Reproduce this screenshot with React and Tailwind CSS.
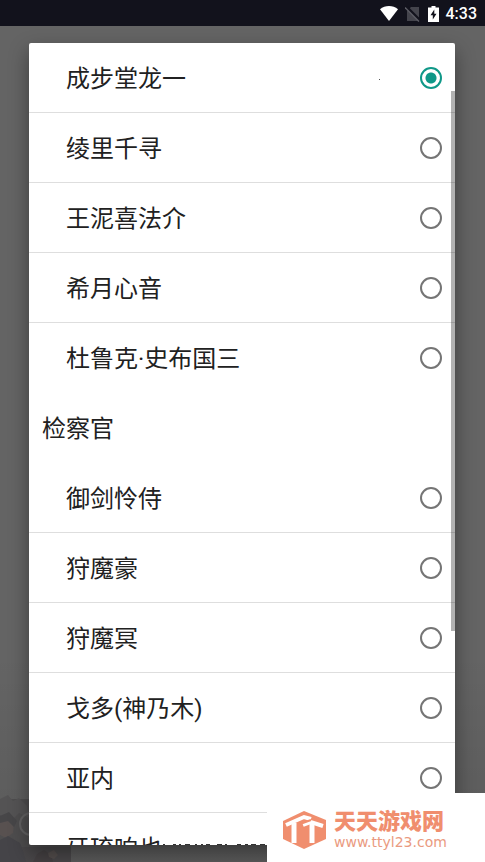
const groups = [
  {
    id: 'attorneys',
    people: ['成步堂龙一', '绫里千寻', '王泥喜法介', '希月心音', '杜鲁克·史布国三'],
  },
  {
    id: 'prosecutors',
    title: '检察官',
    people: ['御剑怜侍', '狩魔豪', '狩魔冥', '戈多(神乃木)', '亚内', '牙琉响也'],
  },
]

function StatusBar() {
  return (
    <header className="flex h-[26px] shrink-0 items-center justify-end bg-[#12121c] pt-px pr-2 text-white">
      <svg className="h-[18px] w-[18px]" viewBox="0 0 18 18" fill="currentColor" aria-hidden="true">
        <path d="M9 16 0 4.2C5-.2 13-.2 18 4.2Z" />
      </svg>
      <svg className="mx-[7px] h-4 w-4" viewBox="0 0 16 16" aria-hidden="true">
        <path d="M6 1h8v14H2V5Z" fill="#44444c" />
        <path d="M1 .5 15 14.5" stroke="#12121c" strokeWidth="3" />
        <path d="M0 1.5 14 15.5" stroke="#5c5c64" strokeWidth="1.5" />
      </svg>
      <svg className="h-4 w-[11px]" viewBox="0 0 11 16" aria-hidden="true">
        <path d="M3.5 0h4v1.5H11V16H0V1.5h3.5Z" fill="currentColor" />
        <path d="M6.3 3.5 2.5 9.3h2.3v4.2L8.5 7.7H6.3Z" fill="#12121c" />
      </svg>
      <time className="ml-[7px] font-['Roboto',sans-serif] text-base leading-5 font-medium">4:33</time>
    </header>
  )
}

function PersonOption({ name, checked, last }) {
  return (
    <label
      className={`flex h-[70px] shrink-0 items-center justify-between pr-[13px] pl-[37px] ${
        last ? '' : 'border-b border-[#dedede]'
      }`}
    >
      <span className="pt-0.5">{name}</span>
      <input
        className="h-[22px] w-[22px] appearance-none rounded-full border-2 border-[#757575] bg-white checked:border-[#0f9888] checked:bg-[radial-gradient(circle,#0f9888_5px,transparent_6px)]"
        defaultChecked={checked}
        name="person"
        type="radio"
      />
    </label>
  )
}

function PersonDialog() {
  return (
    <div
      className="relative flex min-h-0 flex-1 flex-col overflow-hidden rounded-xs bg-white shadow-[0_8px_20px_rgba(0,0,0,0.4)]"
      role="dialog"
      aria-label="人物"
    >
      {groups.map((group) => (
        <section className="flex shrink-0 flex-col" key={group.id}>
          {group.title ? (
            <h2 className="flex h-[70px] items-center pt-0.5 pl-[13px]">{group.title}</h2>
          ) : null}
          {group.people.map((name, index) => (
            <PersonOption
              checked={name === '成步堂龙一'}
              key={name}
              last={index === group.people.length - 1}
              name={name}
            />
          ))}
        </section>
      ))}
      <div className="absolute top-12 right-0 h-[540px] w-1 bg-black/30" />
      <div className="absolute top-9 right-[75px] h-px w-px bg-[#555]" />
      <svg className="absolute bottom-0 left-[134px] h-px w-[104px]" viewBox="0 0 104 1" aria-hidden="true">
        <path
          d="M0 .5h2M10 .5h3M16 .5h2M22 .5h5M32 .5h2M38 .5h2M43 .5h4M54 .5h5M62 .5h2M74 .5h4M82 .5h3M88 .5h5M97 .5h5"
          stroke="#333"
        />
      </svg>
    </div>
  )
}

function Backdrop() {
  return (
    <svg
      className="absolute bottom-0 left-0 h-[67px] w-[71px]"
      viewBox="0 0 71 67"
      fill="none"
      aria-hidden="true"
    >
      <path d="M0 4h71v63H0Z" fill="#4e4d4e" />
      <path d="M0 4 8 0l5 6 6-3 8 8 2 12-10-5-8 8L0 20Z" fill="#545354" />
      <path d="M0 26 8 22l6 6-1 10-7 5-6-3Z" fill="#585150" />
      <path d="M0 21 9 17l8 9-3 6-6-6-8 2Z" fill="#474648" />
      <path d="M0 45 8 41l12 7 8 19H0Z" fill="#454448" />
      <path d="M22 52h49v15H26Z" fill="#494749" />
      <path d="m33 67 4-8 7-4 7 5 2 7Z" fill="#454143" />
      <path d="m48 58 6-3 4 5-4 4-5-2Z" fill="#544e4d" />
      <circle cx="31" cy="29" r="11" stroke="#626162" strokeWidth="2" />
    </svg>
  )
}

function SiteMark() {
  return (
    <a
      className="absolute right-0 bottom-0 flex h-[69px] w-[218px] items-center gap-2 bg-white pt-1 pl-4 text-[#f08e6e]"
      href="#home"
    >
      <svg className="h-[38px] w-[43px] shrink-0" viewBox="0 0 43 38" fill="none" aria-hidden="true">
        <path d="M21 0 43 9v19L21 38 0 28V10Z" fill="currentColor" />
        <path d="M3 14 21 6l7 2" stroke="#fff" strokeWidth="4" />
        <path d="M11 12v20" stroke="#fff" strokeWidth="5" />
        <path d="M20 14 28 11l12 4" stroke="#fff" strokeWidth="4" />
        <path d="M29 12v20" stroke="#fff" strokeWidth="5" />
        <path d="M17 34V13l11-4" stroke="currentColor" strokeWidth="2" />
      </svg>
      <span className="flex flex-col">
        <span className="text-[22px] leading-6 font-black">天天游戏网</span>
        <span className="font-['DejaVu_Sans',sans-serif] text-sm leading-4 text-[#ea9a80]">
          www.ttyl23.com
        </span>
      </span>
    </a>
  )
}

export default function App() {
  return (
    <div className="relative flex h-screen flex-col overflow-hidden bg-[#646464] font-['Roboto','Noto_Sans_CJK_SC',sans-serif] text-2xl text-[#212121]">
      <StatusBar />
      <Backdrop />
      <main className="flex min-h-0 flex-1 flex-col bg-linear-to-b from-transparent from-75% to-black/10 py-[17px] pr-[30px] pl-[29px]">
        <PersonDialog />
      </main>
      <SiteMark />
    </div>
  )
}
